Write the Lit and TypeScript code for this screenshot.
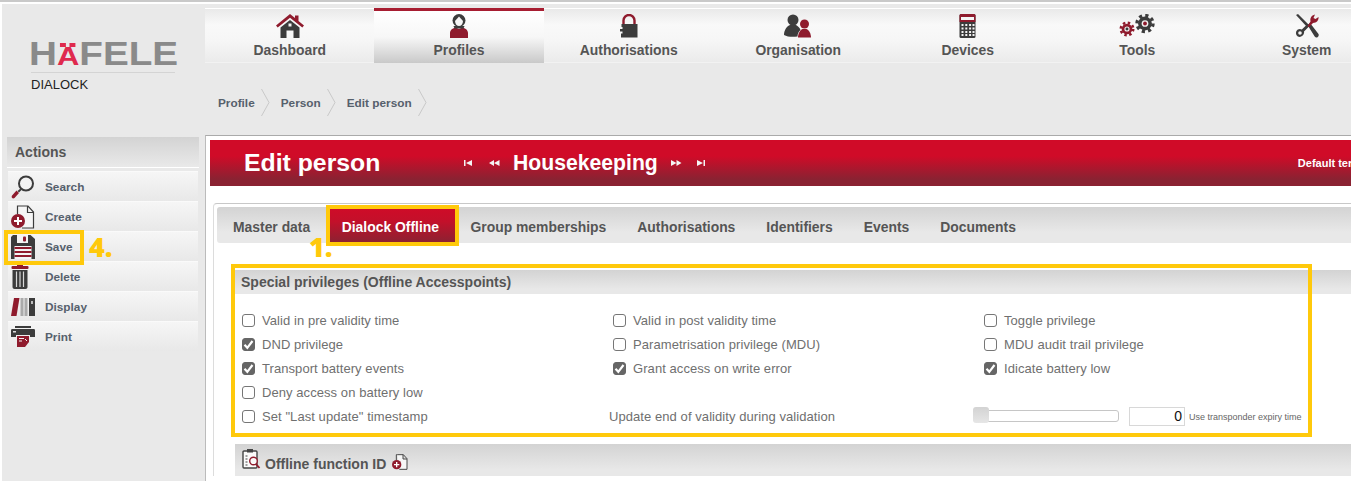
import { LitElement, html, css, svg } from "lit";
import { customElement } from "lit/decorators.js";

const D = "#3c3c3c";
const R = "#8f1b2d";

const gear = (cx: number, cy: number, r: number, col: string, hub: string) => svg`
  <circle cx=${cx} cy=${cy} r=${r} fill="none" stroke=${col} stroke-width=${r * 0.42} stroke-dasharray=${`${(Math.PI * 2 * r) / 16} ${(Math.PI * 2 * r) / 16}`}></circle>
  <circle cx=${cx} cy=${cy} r=${r * 0.86} fill=${col}></circle>
  <circle cx=${cx} cy=${cy} r=${r * 0.42} fill="#f4f4f4"></circle>
  <circle cx=${cx} cy=${cy} r=${r * 0.24} fill=${hub}></circle>`;

const icons: Record<string, unknown> = {
  house: svg`<svg width="28" height="24" viewBox="0 0 28 24">
    <path d="M0 11.5 14 0l5 4V1.5h3.500V7L28 11.500 26.300 13.500 14 3.800 1.700 13.500Z" fill=${R}></path>
    <path d="M4.500 13.500 14 6l9.500 7.500V24H17.500V16.500h-7V24H4.500Z" fill=${D}></path>
    <rect x="12.500" y="9.500" width="3" height="3" fill="#f4f4f4"></rect></svg>`,
  woman: svg`<svg width="20" height="24" viewBox="0 0 20 24">
    <path d="M1 24v-5c0-3 3-5 5.500-5.500L10 15l3.500-1.500C16 14 19 16 19 19v5Z" fill=${R}></path>
    <circle cx="10" cy="6.500" r="6.500" fill=${D}></circle>
    <path d="M10 2.500 14 7c0 3-2 5-4 5S6 10 6 7Z" fill="#f6f6f6"></path>
    <path d="M4.500 12h11l-1 2.500h-9Z" fill=${D}></path></svg>`,
  lock: svg`<svg width="18" height="24" viewBox="0 0 18 24">
    <path d="M3.500 10V6.500a5.500 5.500 0 0 1 11 0V10" fill="none" stroke=${R} stroke-width="2.400"></path>
    <path d="M1.500 10H17.500V23.500H1V19.500H2.500V17.500H0V15H2.500V13H1.500Z" fill=${D}></path></svg>`,
  people: svg`<svg width="28" height="24" viewBox="0 0 28 24">
    <circle cx="9" cy="6" r="5.500" fill=${D}></circle>
    <path d="M0 21c0-5 3-9 6-10h6c2 1 4 3 4.500 5-2 1.500-3 4-3 6.500-5 .5-10 .5-13.500-1.500Z" fill=${D}></path>
    <circle cx="20.500" cy="10" r="4.500" fill=${R}></circle>
    <path d="M14 23.500c0-4 2-7.500 4.500-8.500h4c2.500 1 4.500 4.500 4.500 8.500Z" fill=${R}></path></svg>`,
  calc: svg`<svg width="17" height="24" viewBox="0 0 17 24">
    <rect x="0.500" y="0" width="16" height="24" rx="1.500" fill=${D}></rect>
    <path d="M.5 1.500A1.500 1.500 0 0 1 2 0H15a1.500 1.500 0 0 1 1.500 1.500V8H.5Z" fill=${R}></path>
    <rect x="2" y="3" width="13" height="3" fill="#f4f4f4"></rect>
    ${[10, 13.5, 17, 20].map((y) => [3, 6.8, 10.600, 14].map((x) => svg`<rect x=${x - 0.500} y=${y} width="2" height="2" fill="#f4f4f4"></rect>`))}</svg>`,
  gears: svg`<svg width="36" height="24" viewBox="0 0 36 24">
    ${gear(8, 15, 6.200, R, D)}${gear(26, 9.500, 8, D, R)}</svg>`,
  tools: svg`<svg width="24" height="24" viewBox="0 0 24 24">
    <path d="M1 1 3 0 14 11 12 13Z" fill=${D}></path>
    <path d="M12.500 11 15 9 23.500 20c.5 1 .2 2.500-1 3.200-1 .6-2 .3-2.800-.7Z" fill=${D}></path>
    <path d="M12 13 15.500 7.500C15 5 15.500 3 17.500 1.500L20 0.500 18.500 4 20.500 5 23.500 3C24 6 21.500 9 18 9L14 13Z" fill=${R}></path>
    <path d="M2.800 22.500a4.200 4.200 0 0 1 0-7 4.200 4.200 0 0 1 4 0L11.500 11l2 2L9 17.500a4.500 4.500 0 0 1-6.200 5Z" fill=${D}></path>
    <circle cx="5" cy="19" r="1.800" fill="#f4f4f4"></circle></svg>`,
  search: svg`<svg width="24" height="24" viewBox="0 0 24 24">
    <circle cx="15" cy="8.500" r="7" fill="#f2f2f2" stroke=${D} stroke-width="2"></circle>
    <path d="M9.500 13.500 10.500 15 8 17.500 6.500 16Z" fill=${D}></path>
    <path d="M5.500 15.500 8 18 3.500 23c-1 .8-2 .5-2.500-.2S.5 21 1.500 20Z" fill=${R}></path></svg>`,
  create: svg`<svg width="24" height="24" viewBox="0 0 24 24">
    <path d="M8 1H17L22.500 7V23H11M8 1H6.500V9M16.500 1V7.500H22.500" fill="#f6f6f6" stroke=${D} stroke-width="1.200"></path>
    <circle cx="7" cy="16" r="7" fill=${R}></circle>
    <path d="M7 12v8M3 16h8" stroke="#fff" stroke-width="2"></path></svg>`,
  save: svg`<svg width="24" height="24" viewBox="0 0 24 24">
    <path d="M2 0H19.500L24 4V24H0V2Z" fill=${D}></path>
    <rect x="6" y="0" width="11" height="8" fill="#f4f4f4"></rect>
    <rect x="12" y="1.500" width="3" height="5" rx="1" fill=${R}></rect>
    <rect x="3.500" y="11" width="17" height="13" fill="#f4f4f4"></rect>
    <path d="M3.500 13h17M3.500 17h17M3.500 21h17" stroke=${R} stroke-width="2"></path></svg>`,
  del: svg`<svg width="18" height="24" viewBox="0 0 18 24">
    <rect x="0.500" y="1" width="17" height="3" rx="1" fill=${R}></rect>
    <rect x="6" y="0" width="6" height="2" fill=${R}></rect>
    <path d="M1.500 5H16.500V22c0 1-.8 2-2 2H3.500c-1 0-2-1-2-2Z" fill=${D}></path>
    <path d="M5.500 6.500V22M9 6.500V22M12.500 6.500V22" stroke="#d8d8d8" stroke-width="1.200"></path></svg>`,
  books: svg`<svg width="24" height="18" viewBox="0 0 24 18">
    <path d="M3 0H8.500L5.500 18H0Z" fill=${R}></path>
    <rect x="9.500" y="0" width="3" height="18" fill="#aaa"></rect>
    <rect x="13.500" y="0" width="3" height="18" fill="#aaa"></rect>
    <rect x="18" y="0" width="6" height="18" fill=${D}></rect>
    <rect x="20" y="3" width="2" height="3" fill="#bbb"></rect></svg>`,
  print: svg`<svg width="24" height="21" viewBox="0 0 24 21">
    <path d="M4 0H20V2H4Z" fill=${D}></path>
    <path d="M1 3H23C24 3 24 4 24 5V11H19V9H5V11H0V5C0 4 0 3 1 3Z" fill=${D}></path>
    <rect x="2" y="5" width="3" height="1.500" fill="#ddd"></rect>
    <path d="M6 10H18V16L14 21H6Z" fill=${R}></path>
    <path d="M8 12.500h5M8 15h3M14 13l2 2" stroke="#f4f4f4" stroke-width="1"></path></svg>`,
  clip: svg`<svg width="20" height="24" viewBox="0 0 20 24">
    <rect x="1" y="3" width="14" height="17" rx="1" fill="#fafafa" stroke="#444" stroke-width="1.400"></rect>
    <rect x="5" y="1" width="6" height="3.500" fill="#444"></rect>
    <path d="M3.500 8h2M3.500 11h2M3.500 14h2M3.500 17h2" stroke="#444" stroke-width="1.200"></path>
    <circle cx="11.500" cy="13" r="3.800" fill="#fafafa" stroke=${R} stroke-width="1.400"></circle>
    <path d="M14 16l3.500 4" stroke=${R} stroke-width="1.800"></path></svg>`,
  chev: svg`<svg width="9" height="27" viewBox="0 0 9 27"><path d="M.5 0 8 13.500.5 27" fill="none" stroke="#c8c8c8"></path></svg>`,
  first: svg`<svg class="first" width="10" height="6" viewBox="0 0 10 6"><path d="M1 0H2.500V6H1ZM3 3 9 0V6Z" fill="#f4f4f4"></path></svg>`,
  prev: svg`<svg class="prev" width="11" height="6" viewBox="0 0 11 6"><path d="M0 3 5 0V6ZM5 3 10.500 0V6Z" fill="#f4f4f4"></path></svg>`,
  next: svg`<svg class="next" width="11" height="6" viewBox="0 0 11 6"><path d="M0 0 5.500 3 0 6ZM5.500 0 10.500 3 5.500 6Z" fill="#f4f4f4"></path></svg>`,
  last: svg`<svg width="10" height="6" viewBox="0 0 10 6"><path d="M1 0 7 3 1 6ZM7.500 0H9V6H7.500Z" fill="#f4f4f4"></path></svg>`,
  check: svg`<svg width="13" height="13" viewBox="0 0 13 13"><path d="M2.500 6.800 5.300 9.800 10.500 3" fill="none" stroke="#fff" stroke-width="2.200"></path></svg>`,
};

const NAV = [
  ["house", "Dashboard"],
  ["woman", "Profiles"],
  ["lock", "Authorisations"],
  ["people", "Organisation"],
  ["calc", "Devices"],
  ["gears", "Tools"],
  ["tools", "System"],
];
const ACTIONS = [
  ["search", "Search"],
  ["create", "Create"],
  ["save", "Save"],
  ["del", "Delete"],
  ["books", "Display"],
  ["print", "Print"],
];
const TABS = ["Master data", "Dialock Offline", "Group memberships", "Authorisations", "Identifiers", "Events", "Documents"];
const CHECKS: [string, boolean][] = [
  ["Valid in pre validity time", false],
  ["Valid in post validity time", false],
  ["Toggle privilege", false],
  ["DND privilege", true],
  ["Parametrisation privilege (MDU)", false],
  ["MDU audit trail privilege", false],
  ["Transport battery events", true],
  ["Grant access on write error", true],
  ["Idicate battery low", true],
  ["Deny access on battery low", false],
];

@customElement("app-root")
export class AppRoot extends LitElement {
  static styles = css`
    :host {
      display: block;
      position: relative;
      width: 1351px;
      height: 481px;
      overflow: hidden;
      background: #fff;
      font-family: "Liberation Sans", Arial, sans-serif;
      color: #555;
    }
    .page {
      margin: 2px 0 0 2px;
      height: 477px;
      background: #e9e9e9;
    }
    .topline {
      height: 2px;
      background: #c9c9c9;
    }
    .head {
      display: flex;
      height: 131px;
    }
    .logo {
      width: 203px;
      flex: none;
      box-sizing: border-box;
      padding: 37px 0 0 29px;
    }
    .brand {
      width: 144px;
      height: 31px;
      border-bottom: 1px solid #d4d4d4;
    }
    .word {
      display: inline-block;
      margin-left: -2px;
      transform: scaleX(1.19);
      transform-origin: left top;
      font-size: 32.500px;
      line-height: 26px;
      font-weight: 700;
      color: #8a8a8a;
      letter-spacing: 0;
      white-space: nowrap;
    }
    .a {
      position: relative;
      display: inline-block;
      color: #df2a4e;
      font-size: 26px;
    }
    .a i {
      position: absolute;
      top: 0;
      width: 5px;
      height: 4px;
      background: #df2a4e;
    }
    .a i:first-child { left: 3px; }
    .a i:last-child { left: 11px; }
    .dialock {
      margin-top: 5px;
      font-size: 13px;
      line-height: 14px;
      color: #222;
    }
    .headright {
      flex: 1;
      min-width: 0;
    }
    .nav {
      display: flex;
      margin-top: 4px;
      height: 55px;
      box-sizing: border-box;
      border-top: 1px solid #fff;
      border-bottom: 1px solid #f2f2f2;
      background: linear-gradient(#e9e9e9 0, #f9f9f9 30%, #f6f6f6 60%, #ebebeb 100%);
    }
    .nav a {
      flex: 0 0 169.500px;
      display: flex;
      flex-direction: column;
      align-items: center;
      box-sizing: border-box;
      padding-top: 5px;
      font-size: 13.900px;
      font-weight: 700;
      color: #555;
    }
    .nav a .ic {
      height: 24px;
      display: flex;
      align-items: flex-start;
    }
    .nav a .lb {
      margin-top: 4px;
      line-height: 16px;
    }
    .nav a.on {
      flex-basis: 170px;
      margin: -1px 0 -1px -0.500px;
      height: 55px;
      border-top: 3px solid #a71d31;
      padding-top: 3px;
      background: linear-gradient(#fff 0, #f7f7f7 50%, #c9c9c9 100%);
    }
    .crumbs {
      display: flex;
      align-items: center;
      margin-top: 26px;
      padding-left: 13px;
      font-size: 11.800px;
      font-weight: 700;
      color: #56606c;
    }
    .crumbs svg {
      display: block;
      margin: 0 11px 0 6px;
    }
    .body {
      display: flex;
    }
    .side {
      width: 203px;
      flex: none;
      box-sizing: border-box;
      padding: 2px 6px 0 5px;
    }
    .sidehead {
      height: 30px;
      line-height: 30px;
      padding-left: 8px;
      font-size: 14px;
      font-weight: 700;
      color: #555;
      background: linear-gradient(#d3d3d3, #e9e9e9);
      border-bottom: 1px solid #fff;
      margin-bottom: 3px;
    }
    .act {
      display: flex;
      align-items: center;
      height: 30px;
      box-sizing: border-box;
      margin: 0 1px;
      padding-left: 3px;
      font-size: 11.800px;
      font-weight: 700;
      color: #56606c;
      background: linear-gradient(#f6f6f6, #e8e8e8);
      border-top: 1px solid #fafafa;
    }
    .act .ic {
      width: 34px;
      flex: none;
      display: flex;
      justify-content: flex-start;
      padding-left: 0;
    }
    .main {
      flex: 1;
      min-width: 0;
      height: 346px;
      box-sizing: border-box;
      border-top: 1px solid #aaa;
      border-left: 1px solid #bbb;
      background: #fff;
      padding: 4px 0 0 4px;
    }
    .banner {
      display: flex;
      align-items: center;
      white-space: nowrap;
      height: 46px;
      padding-left: 34px;
      color: #fff;
      font-weight: 700;
      background: linear-gradient(#d00b28 0, #d00b28 35%, #8a2232 85%, #8a2232 100%);
    }
    .banner h1 {
      margin: 0;
      width: 219px;
      flex: none;
      font-size: 24.800px;
      line-height: 46px;
      font-weight: 700;
    }
    .banner h2 {
      margin: 0 13px 0 0;
      font-size: 21.200px;
      font-weight: 700;
    }
    .banner svg {
      display: block;
      flex: none;
    }
    .banner .first { margin-right: 16px; }
    .banner .prev { margin-right: 13px; }
    .banner .next { margin-right: 14px; }
    .banner .tpl {
      margin-left: 592px;
      font-size: 11px;
    }
    .tabwrap {
      margin: 17px 0 0 3px;
      border-top: 1px solid #c8c8c8;
      border-left: 1px solid #dcdcdc;
      border-top-left-radius: 4px;
      padding: 3px 0 0 3px;
    }
    .tabs {
      display: flex;
      height: 36px;
      border-radius: 3px 0 0 3px;
      background: linear-gradient(#d3d3d3, #e8e8e8 70%);
      font-size: 13.900px;
      font-weight: 700;
      color: #555;
    }
    .tabs span {
      box-sizing: border-box;
      height: 36px;
      line-height: 40px;
      padding: 0 15.500px;
      white-space: nowrap;
    }
    .tabs span:first-child {
      padding-left: 16px;
    }
    .tabs span.on {
      color: #fff;
      padding: 0 16px;
      background: linear-gradient(#d00b28 0, #c3102a 40%, #8a2232 100%);
    }
    .sec {
      margin: 27px 0 0 18px;
    }
    .sechead {
      height: 24px;
      line-height: 24px;
      padding-left: 6px;
      font-size: 14px;
      font-weight: 700;
      color: #555;
      background: linear-gradient(#d3d3d3, #e8e8e8 80%);
    }
    .grid {
      display: grid;
      grid-template-columns: 371px 371px 1fr;
      grid-auto-rows: 24px;
      padding: 14px 0 0 7px;
    }
    .cell {
      display: flex;
      align-items: center;
      font-size: 13px;
      letter-spacing: 0.070px;
      color: #6f6f6f;
      white-space: nowrap;
    }
    .wide {
      grid-column: 1 / -1;
    }
    .box {
      width: 13px;
      height: 13px;
      box-sizing: border-box;
      margin-right: 7px;
      border: 1px solid #767676;
      border-radius: 3px;
      background: #fff;
      flex: none;
    }
    .box.on {
      background: #666;
      border-color: #666;
    }
    .box svg {
      display: block;
      margin: -1px;
    }
    .upd {
      margin-left: -4px;
    }
    .sliderrow {
      position: relative;
      margin-left: -11px;
    }
    .track {
      width: 144px;
      height: 10px;
      border: 1px solid #c6c6c6;
      border-radius: 3px;
      background: #fff;
      margin-top: -1px;
    }
    .thumb {
      position: absolute;
      left: 0;
      top: 3px;
      width: 16px;
      height: 16px;
      border-radius: 3px;
      background: linear-gradient(#d3d3d3, #e6e6e6);
    }
    .num {
      width: 56px;
      height: 19px;
      box-sizing: border-box;
      margin-left: 10px;
      padding-right: 2px;
      border: 1px solid #d8d8d8;
      text-align: right;
      font-size: 14px;
      line-height: 17px;
      color: #111;
    }
    .hint {
      margin-left: 4px;
      font-size: 9px;
      color: #666;
      letter-spacing: 0;
      margin-top: 2px;
    }
    .sec2 {
      margin: 16px 0 0 18px;
      height: 32px;
      display: flex;
      align-items: center;
      padding-left: 7px;
      font-size: 14px;
      font-weight: 700;
      color: #555;
      background: linear-gradient(#d3d3d3, #e8e8e8 80%);
    }
    .sec2 > span { margin: 8px 6px 0 3px; }
    .sec2 svg { display: block; }
    .sec2 .doc { margin-top: 4px; }
    .mark {
      position: absolute;
      box-sizing: border-box;
      border: 4px solid #ffc90b;
      pointer-events: none;
    }
    .m-save { left: 4px; top: 230px; width: 80px; height: 35px; }
    .m-tab { left: 326px; top: 205px; width: 133px; height: 41px; }
    .m-sec { left: 231px; top: 264px; width: 1081px; height: 173px; }
    .num-mark {
      position: absolute;
      font-family: "Open Sans", "Liberation Sans", sans-serif;
      font-size: 27px;
      line-height: 27px;
      font-weight: 800;
      color: #ffc90b;
    }
    .n4 { left: 89px; top: 233px; }
    .n1 { left: 309px; top: 233px; }
  `;

  render() {
    return html`
      <div class="topline"></div>
      <div class="page">
        <div class="head">
          <div class="logo">
            <div class="brand"><span class="word">H<span class="a"><i></i>A<i></i></span>FELE</span></div>
            <div class="dialock">DIALOCK</div>
          </div>
          <div class="headright">
            <nav class="nav">
              ${NAV.map(
                ([i, l]) => html`<a class=${l === "Profiles" ? "on" : ""}><span class="ic">${icons[i]}</span><span class="lb">${l}</span></a>`
              )}
            </nav>
            <div class="crumbs">
              <span>Profile</span>${icons.chev}<span>Person</span>${icons.chev}<span>Edit person</span>${icons.chev}
            </div>
          </div>
        </div>
        <div class="body">
          <aside class="side">
            <div class="sidehead">Actions</div>
            ${ACTIONS.map(([i, l]) => html`<div class="act"><span class="ic">${icons[i]}</span>${l}</div>`)}
          </aside>
          <main class="main">
            <div class="banner">
              <h1>Edit person</h1>
              ${icons.first}${icons.prev}
              <h2>Housekeeping</h2>
              ${icons.next}${icons.last}
              <span class="tpl">Default ter</span>
            </div>
            <div class="tabwrap">
              <div class="tabs">
                ${TABS.map((t) => html`<span class=${t === "Dialock Offline" ? "on" : ""}>${t}</span>`)}
              </div>
              <section class="sec">
                <div class="sechead">Special privileges (Offline Accesspoints)</div>
                <div class="grid">
                  ${CHECKS.map(
                    ([l, c], n) => html`<div class="cell ${n === 9 ? "wide" : ""}">
                      <span class="box ${c ? "on" : ""}">${c ? icons.check : ""}</span>${l}
                    </div>`
                  )}
                  <div class="cell"><span class="box"></span>Set "Last update" timestamp</div>
                  <div class="cell upd">Update end of validity during validation</div>
                  <div class="cell sliderrow">
                    <div class="track"></div>
                    <div class="thumb"></div>
                    <div class="num">0</div>
                    <div class="hint">Use transponder expiry time</div>
                  </div>
                </div>
              </section>
              <div class="sec2">
                ${icons.clip}<span>Offline function ID</span>
                <svg class="doc" width="16" height="18" viewBox="0 0 24 24">
                  <path d="M8 1H17L22.500 7V23H11M8 1H6.500V9M16.500 1V7.500H22.500" fill="#f6f6f6" stroke="#3c3c3c" stroke-width="1.400"></path>
                  <circle cx="7" cy="16" r="7" fill="#8f1b2d"></circle>
                  <path d="M7 12v8M3 16h8" stroke="#fff" stroke-width="2"></path>
                </svg>
              </div>
            </div>
          </main>
        </div>
      </div>
      <div class="mark m-save"></div>
      <div class="mark m-tab"></div>
      <div class="mark m-sec"></div>
      <div class="num-mark n4">4.</div>
      <div class="num-mark n1">1.</div>
    `;
  }
}
